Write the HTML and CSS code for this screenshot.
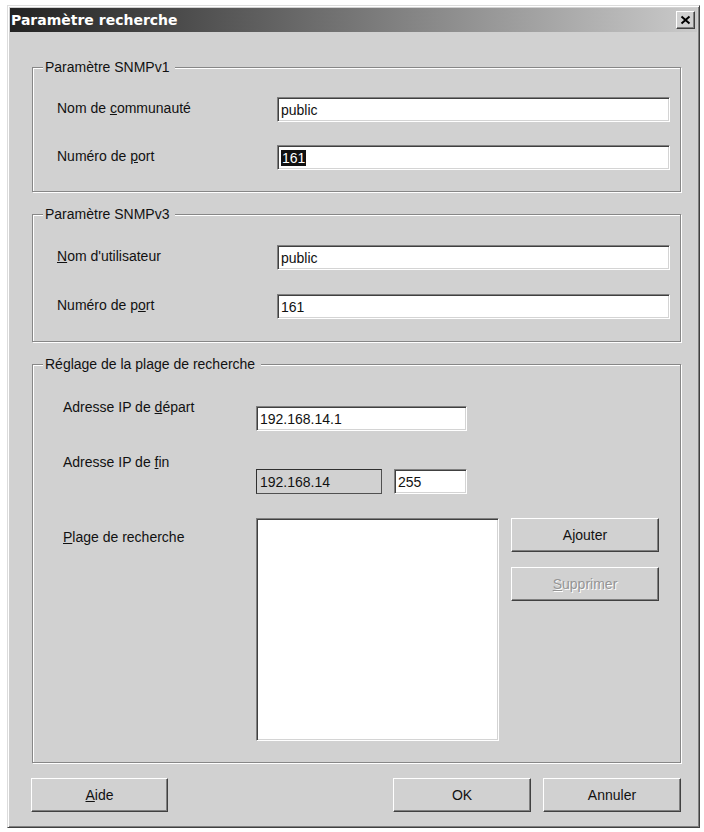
FILE: index.html
```html
<!DOCTYPE html>
<html lang="fr">
<head>
  <meta charset="UTF-8">
  <title>Paramètre recherche</title>
  <link rel="stylesheet" href="styles.css">
</head>
<body>
  <div class="dialog">
    <div class="titlebar">
      <span class="title">Paramètre recherche</span>
      <button class="close" title="Fermer">
        <svg width="11" height="10" viewBox="0 0 11 10"><path d="M1.5 1.5 L9.5 8.5 M9.5 1.5 L1.5 8.5" stroke="#000" stroke-width="2" fill="none"/></svg>
      </button>
    </div>

    <div class="content">
      <div class="group g1">
        <span class="legend">Paramètre SNMPv1</span>
        <div class="field">
          <label>Nom de <u>c</u>ommunauté</label>
          <div class="edit">public</div>
        </div>
        <div class="field">
          <label>Numéro de <u>p</u>ort</label>
          <div class="edit"><span class="sel">161</span></div>
        </div>
      </div>

      <div class="group g2">
        <span class="legend">Paramètre SNMPv3</span>
        <div class="field">
          <label><u>N</u>om d'utilisateur</label>
          <div class="edit">public</div>
        </div>
        <div class="field">
          <label>Numéro de p<u>o</u>rt</label>
          <div class="edit">161</div>
        </div>
      </div>

      <div class="group g3">
        <span class="legend">Réglage de la plage de recherche</span>
        <div class="field f-start">
          <label>Adresse IP de <u>d</u>épart</label>
          <div class="edit ip-start">192.168.14.1</div>
        </div>
        <div class="field f-end">
          <label>Adresse IP de <u>f</u>in</label>
          <div class="edit ip-prefix">192.168.14</div>
          <div class="edit ip-last">255</div>
        </div>
        <div class="field f-range">
          <label><u>P</u>lage de recherche</label>
          <div class="listbox"></div>
          <div class="side-buttons">
            <button class="btn">Ajouter</button>
            <button class="btn disabled"><u>S</u>upprimer</button>
          </div>
        </div>
      </div>

      <div class="actions">
        <button class="btn wide"><u>A</u>ide</button>
        <div class="right">
          <button class="btn wide">OK</button>
          <button class="btn wide">Annuler</button>
        </div>
      </div>
    </div>
  </div>
</body>
</html>
```

FILE: styles.css
```css
body {
  margin: 0;
  background-color: #fff;
  font-family: "Liberation Sans", Arial, sans-serif;
  font-size: 14px;
  color: #111;
}

/* window frame */
.dialog {
  margin: 5px 0 0 7px;
  width: 693px;
  height: 823px;
  box-sizing: border-box;
  padding: 2px;
  background-color: #d1d1d1;
  border: 1px solid;
  border-color: #dcdcdc #404040 #404040 #dcdcdc;
  box-shadow: inset 1px 1px 0 #fff, inset -1px -1px 0 #808080;
}
.titlebar {
  height: 24px;
  display: flex;
  align-items: center;
  justify-content: space-between;
  padding: 0 2px 0 1px;
  background: linear-gradient(to right, #222, #cacaca);
}
.title {
  font-family: "DejaVu Sans", Verdana, sans-serif;
  font-weight: bold;
  font-size: 14px;
  color: #fff;
}
.close {
  width: 19px;
  height: 18px;
  padding: 0;
  display: flex;
  align-items: center;
  justify-content: center;
  background-color: #d1d1d1;
  border: 1px solid;
  border-color: #fff #404040 #404040 #fff;
  box-shadow: inset -1px -1px 0 #808080;
}

.content {
  padding: 35px 16px 0 22px;
}

/* group boxes */
.group {
  position: relative;
  border: 1px solid #878787;
  box-shadow: inset 1px 1px 0 #fff, 1px 1px 0 #fff;
}
.group + .group {
  margin-top: 22px;
}
.legend {
  position: absolute;
  top: -9px;
  left: 10px;
  padding: 0 6px 0 2px;
  line-height: 16px;
  background-color: #d1d1d1;
}
.g1 {
  padding: 29px 10px 21px 24px;
}
.g2 {
  padding: 30px 10px 22px 24px;
}
.g3 {
  padding: 34px 10px 21px 30px;
}

.field {
  display: flex;
  align-items: center;
}
.field label {
  width: 220px;
  flex: none;
  padding-bottom: 3px;
}
.g1 .field + .field {
  margin-top: 23px;
}
.g2 .field + .field {
  margin-top: 24px;
}

/* the range group puts its labels above the middle of the boxes */
.g3 .field {
  align-items: flex-start;
}
.g3 .field label {
  width: 193px;
  padding: 0;
  line-height: 16px;
}
.g3 .f-start .edit {
  margin-top: 7px;
}
.g3 .f-end {
  margin-top: 23px;
}
.g3 .f-end .edit {
  margin-top: 15px;
}
.g3 .f-range {
  margin-top: 24px;
}
.g3 .f-range label {
  padding-top: 11px;
}

/* edit boxes */
.edit {
  flex: 1;
  height: 25px;
  box-sizing: border-box;
  display: flex;
  align-items: center;
  padding: 0 3px;
  background-color: #fff;
  border: 1px solid;
  border-color: #808080 #fff #fff #808080;
  box-shadow: inset 1px 1px 0 #404040, inset -1px -1px 0 #d4d4d4;
}
.sel {
  background-color: #111;
  color: #fff;
  padding: 0 1px;
}
.ip-start {
  flex: none;
  width: 211px;
}
.ip-prefix {
  flex: none;
  width: 126px;
  background-color: #d1d1d1;
  border-color: #303030 #505050 #505050 #303030;
  box-shadow: none;
}
.ip-last {
  flex: none;
  width: 73px;
  margin-left: 12px;
}
.listbox {
  width: 243px;
  height: 223px;
  box-sizing: border-box;
  background-color: #fff;
  border: 1px solid;
  border-color: #808080 #fff #fff #808080;
  box-shadow: inset 1px 1px 0 #404040, inset -1px -1px 0 #d4d4d4;
}
.side-buttons {
  display: flex;
  flex-direction: column;
  margin-left: 12px;
}
.side-buttons .btn {
  width: 148px;
}
.side-buttons .btn + .btn {
  margin-top: 15px;
}

/* push buttons */
.btn {
  height: 34px;
  padding: 0;
  font: inherit;
  color: #111;
  background-color: #d1d1d1;
  border: 1px solid;
  border-color: #fff #404040 #404040 #fff;
  box-shadow: inset -1px -1px 0 #808080;
}
.btn.disabled {
  color: #959595;
  text-shadow: 1px 1px 0 #fff;
}
.actions {
  display: flex;
  justify-content: space-between;
  margin: 15px 0 0 -1px;
}
.actions .right {
  display: flex;
  gap: 12px;
}
.btn.wide {
  width: 138px;
}
.actions > .btn.wide {
  width: 137px;
}
```
